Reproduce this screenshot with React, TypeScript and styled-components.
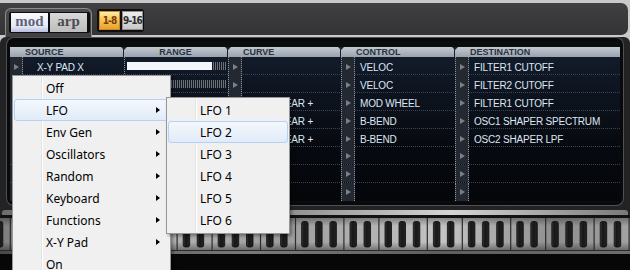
import React from 'react'
import styled, { createGlobalStyle, css } from 'styled-components'

const GlobalStyle = createGlobalStyle`
  * { box-sizing: border-box; }
  html, body { margin: 0; padding: 0; }
  body {
    width: 630px;
    height: 270px;
    overflow: hidden;
    background: #c9c9c9;
    font-family: 'Liberation Sans', Arial, sans-serif;
  }
`

const Screen = styled.div`
  position: relative;
  width: 630px;
  height: 270px;
  overflow: hidden;
  padding-top: 3px;
  display: flex;
  flex-direction: column;
`

// top bar with the mod / arp tabs and the 1-8 / 9-16 page switch
const TopBar = styled.div`
  height: 32px;
  margin-right: 2px;
  display: flex;
  align-items: flex-end;
  background: linear-gradient(#403f42, #333335);
  border-radius: 0 7px 7px 0;
`
const TabPanel = styled.div`
  position: relative;
  z-index: 1;
  height: 29px;
  margin: 0 0 -2px 5px;
  padding: 3px 0 0 3px;
  width: 87px;
  background: linear-gradient(#4c4c4f, #3e3e40);
  border: 1px solid #8b8b8d;
  border-bottom: none;
  border-radius: 6px 6px 0 0;
`
const SegGroup = styled.div`
  display: flex;
  gap: 2px;
  padding: 1px 2px;
  width: 81px;
  height: 21px;
  background: #0e0e0f;
  border-radius: 2px;
`
const SegButton = styled.div<{ $active?: boolean }>`
  width: 37px;
  display: flex;
  align-items: center;
  justify-content: center;
  font: bold 15px/1 'Liberation Serif', 'Times New Roman', serif;
  padding-bottom: 2px;
  ${(p) =>
    p.$active
      ? css`
          color: #5d6478;
          background: linear-gradient(#fbfcfe, #e4e8f2 70%, #b7bde0);
        `
      : css`
          color: #4c4c4e;
          background: linear-gradient(#d8d8d8, #bdbdbd);
        `}
`
const PageGroup = styled.div`
  display: flex;
  gap: 2px;
  margin: 0 0 3px 5px;
  padding: 2px 1px 2px 2px;
  height: 23px;
  background: #0f0f10;
  border-radius: 3px;
`
const PageButton = styled.div<{ $active?: boolean }>`
  width: 21px;
  display: flex;
  align-items: center;
  justify-content: center;
  white-space: nowrap;
  font: bold 10px/1 'DejaVu Sans Condensed', 'Liberation Sans Narrow', sans-serif;
  letter-spacing: -0.9px;
  border-radius: 1px;
  ${(p) =>
    p.$active
      ? css`
          color: #7a3c00;
          background: linear-gradient(#fff2b8, #f7c65a 45%, #e89d2c);
          box-shadow: inset 0 0 0 1px #c8891e;
        `
      : css`
          color: #2e2e30;
          background: linear-gradient(#f0f0f0, #c6c6c8);
          box-shadow: inset 0 0 0 1px #8e8e90;
        `}
`

const MainPanel = styled.div`
  flex: 1;
  margin-top: 2px;
  display: flex;
  flex-direction: column;
  background: #232325;
  border-radius: 6px 6px 0 0;
`
const TableFrame = styled.div`
  margin: 1px 7px 0 7px;
  padding: 6px 0 1px;
  background: #0b0c0e;
  border: 3px solid #08090a;
  border-radius: 7px;
  box-shadow: 0 0 0 1px #505054;
`

const COLS = '114px 104px 113px 114px 165px'

const HeadRow = styled.div`
  display: grid;
  grid-template-columns: ${COLS};
  height: 10px;
`
const HeadCell = styled.div<{ $center?: boolean }>`
  position: relative;
  background: linear-gradient(#c3cad2, #9aa2ac);
  border-right: 1px solid #1d2127;
  font: bold 9px/10px 'Liberation Sans', Arial, sans-serif;
  color: #29313d;
  white-space: nowrap;
  padding-left: ${(p) => (p.$center ? 0 : 15)}px;
  text-align: ${(p) => (p.$center ? 'center' : 'left')};
  &::after {
    content: '';
    position: absolute;
    right: -4px;
    top: 0;
    border-left: 3px solid transparent;
    border-right: 3px solid transparent;
    border-top: 3px solid #1d2127;
    z-index: 1;
  }
  &:last-child {
    border-right: none;
  }
  &:last-child::after {
    display: none;
  }
`

const Body = styled.div`
  background: linear-gradient(#121b2a, #070a10 60%, #04060a);
`
const Row = styled.div`
  display: grid;
  grid-template-columns: ${COLS};
  height: 18px;
  border-bottom: 1px dotted #3c4454;
  &:last-child {
    border-bottom: none;
  }
`
const Cell = styled.div`
  display: flex;
  min-width: 0;
`
const Arrow = styled.div<{ $first?: boolean }>`
  flex: none;
  width: ${(p) => (p.$first ? 13 : 14)}px;
  display: flex;
  align-items: center;
  justify-content: center;
  background: #242931;
  border-right: 1px dotted #8d95a0;
  border-left: ${(p) => (p.$first ? 'none' : '1px dotted #8d95a0')};
  &::after {
    content: '';
    border-left: 5px solid #78808b;
    border-top: 3.5px solid transparent;
    border-bottom: 3.5px solid transparent;
  }
`
const CellText = styled.div<{ $pad?: number; $center?: boolean }>`
  flex: 1;
  min-width: 0;
  padding-top: 2px;
  padding-left: ${(p) => (p.$center ? 0 : p.$pad ?? 5)}px;
  text-align: ${(p) => (p.$center ? 'center' : 'left')};
  font-size: 10px;
  line-height: 17px;
  letter-spacing: -0.2px;
  color: #dde6f3;
  white-space: nowrap;
`
const RangeCell = styled.div`
  border-left: 1px dotted #8d95a0;
  padding: 5px 2px 0 2px;
`
const RangeTrack = styled.div`
  height: 8px;
  background: repeating-linear-gradient(90deg, #6a717b 0 1px, #151920 1px 2px);
`
const RangeFill = styled.div`
  height: 100%;
  background: #f3f6fa;
`

// keyboard strip under the matrix
const KeyArea = styled.div`
  margin-top: 5px;
  display: flex;
  flex-direction: column;
`
const Rail = styled.div`
  height: 5px;
  margin: 0 2px;
  border-radius: 3px 3px 0 0;
  background: linear-gradient(90deg, #6c6c6c, #a9a9a9 25%, #8e8e8e 45%, #d6d6d6 72%, #9a9a9a 90%, #7a7a7a);
`
const KeyBed = styled.div`
  height: 35px;
  border-top: 3px solid #121212;
  background: linear-gradient(rgba(0, 0, 0, 0.3), transparent 25%, transparent 75%, rgba(0, 0, 0, 0.35)),
    linear-gradient(90deg, #7e7e7e, #b8b8b8 22%, #9c9c9c 45%, #c4c4c4 70%, #8e8e8e 88%, #a2a2a2);
`
const BottomRail = styled.div`
  height: 4px;
  border-top: 1px solid #2a2a2a;
  background: linear-gradient(90deg, #4a4a4a, #7a7a7a 40%, #5e5e5e 70%, #6e6e6e);
`
const Tail = styled.div`
  flex: 1;
  background: #070707;
`

// context menu (Windows 7 look)
const MenuBox = styled.div`
  position: absolute;
  z-index: 5;
  padding: 1px;
  background: #f0f0f0;
  border: 1px solid #979797;
  box-shadow: 2px 2px 3px rgba(0, 0, 0, 0.35);
  font-family: 'Noto Sans', 'Segoe UI', sans-serif;
  font-size: 12px;
  color: #000;
  &::before {
    content: '';
    position: absolute;
    top: 1px;
    bottom: 1px;
    left: 28px;
    width: 1px;
    background: #e2e3e3;
    box-shadow: 1px 0 0 #ffffff;
  }
`
const MainMenu = styled(MenuBox)`
  left: 12px;
  top: 75px;
  width: 159px;
`
const SubMenu = styled(MenuBox)`
  left: 166px;
  top: 97px;
  width: 124px;
  padding-bottom: 2px;
  z-index: 6;
`
const MenuItem = styled.div<{ $hot?: boolean }>`
  position: relative;
  height: 22px;
  display: flex;
  align-items: center;
  padding: 0 8px 0 31px;
  border: 1px solid transparent;
  border-radius: 3px;
  white-space: nowrap;
  ${(p) =>
    p.$hot &&
    css`
      border-color: #b3d2f6;
      background: linear-gradient(#f4f8fd, #e1ebf8);
    `}
`
const SubArrow = styled.span`
  margin-left: auto;
  border-left: 4px solid #000;
  border-top: 3.5px solid transparent;
  border-bottom: 3.5px solid transparent;
`

type ModRow = {
  src: string
  range: number
  curve: string
  ctrl: string
  dest: string
}

const rows: ModRow[] = [
  { src: 'X-Y PAD X', range: 86, curve: '', ctrl: 'VELOC', dest: 'FILTER1 CUTOFF' },
  { src: '', range: 0, curve: '', ctrl: 'VELOC', dest: 'FILTER2 CUTOFF' },
  { src: '', range: 50, curve: 'LINEAR +', ctrl: 'MOD WHEEL', dest: 'FILTER1 CUTOFF' },
  { src: '', range: 40, curve: 'LINEAR +', ctrl: 'B-BEND', dest: 'OSC1 SHAPER SPECTRUM' },
  { src: '', range: 40, curve: 'LINEAR +', ctrl: 'B-BEND', dest: 'OSC2 SHAPER LPF' },
  { src: '', range: 0, curve: '', ctrl: '', dest: '' },
  { src: '', range: 0, curve: '', ctrl: '', dest: '' },
  { src: '', range: 0, curve: '', ctrl: '', dest: '' },
]

const menuItems = [
  { label: 'Off', sub: false },
  { label: 'LFO', sub: true },
  { label: 'Env Gen', sub: true },
  { label: 'Oscillators', sub: true },
  { label: 'Random', sub: true },
  { label: 'Keyboard', sub: true },
  { label: 'Functions', sub: true },
  { label: 'X-Y Pad', sub: true },
  { label: 'On', sub: false },
]

const Keys = () => {
  const octave = 83.4
  const start = 9.7 - octave
  const blacks = [6.7, 20.7, 41.7, 55.7, 70]
  const items = []
  for (let k = 0; k < 9; k++) {
    const base = start + k * octave
    items.push(<rect key={`l${k}a`} x={base} y={0} width={1.2} height={32} fill="#2c2c2c" />)
    items.push(<rect key={`l${k}b`} x={base + 35} y={0} width={1.2} height={32} fill="#2c2c2c" />)
    blacks.forEach((off, i) =>
      items.push(
        <rect
          key={`b${k}-${i}`}
          x={base + off}
          y={3.5}
          width={6.5}
          height={25.5}
          rx={2}
          fill="url(#blackKey)"
          stroke="#0b0b0b"
          strokeWidth={0.8}
        />
      )
    )
  }
  return (
    <svg width="630" height="32" viewBox="0 0 630 32" style={{ display: 'block' }}>
      <defs>
        <linearGradient id="blackKey" x1="0" x2="1" y1="0" y2="0">
          <stop offset="0" stopColor="#3a3a3a" />
          <stop offset="0.35" stopColor="#181818" />
          <stop offset="1" stopColor="#222" />
        </linearGradient>
      </defs>
      {items}
    </svg>
  )
}

export default function App() {
  return (
    <>
      <GlobalStyle />
      <Screen>
        <TopBar>
          <TabPanel>
            <SegGroup>
              <SegButton $active>mod</SegButton>
              <SegButton>arp</SegButton>
            </SegGroup>
          </TabPanel>
          <PageGroup>
            <PageButton $active>1-8</PageButton>
            <PageButton>9-16</PageButton>
          </PageGroup>
        </TopBar>

        <MainPanel>
          <TableFrame>
            <HeadRow>
              <HeadCell>SOURCE</HeadCell>
              <HeadCell $center>RANGE</HeadCell>
              <HeadCell>CURVE</HeadCell>
              <HeadCell>CONTROL</HeadCell>
              <HeadCell>DESTINATION</HeadCell>
            </HeadRow>
            <Body>
              {rows.map((r, i) => (
                <Row key={i}>
                  <Cell>
                    <Arrow $first />
                    <CellText $pad={14}>{r.src}</CellText>
                  </Cell>
                  <RangeCell>
                    <RangeTrack>
                      <RangeFill style={{ width: `${r.range}%` }} />
                    </RangeTrack>
                  </RangeCell>
                  <Cell>
                    <Arrow />
                    <CellText $center>{r.curve}</CellText>
                  </Cell>
                  <Cell>
                    <Arrow />
                    <CellText>{r.ctrl}</CellText>
                  </Cell>
                  <Cell>
                    <Arrow />
                    <CellText>{r.dest}</CellText>
                  </Cell>
                </Row>
              ))}
            </Body>
          </TableFrame>

          <KeyArea>
            <Rail />
            <KeyBed>
              <Keys />
            </KeyBed>
            <BottomRail />
          </KeyArea>
          <Tail />
        </MainPanel>

        <MainMenu>
          {menuItems.map((m) => (
            <MenuItem key={m.label} $hot={m.label === 'LFO'}>
              {m.label}
              {m.sub && <SubArrow />}
            </MenuItem>
          ))}
        </MainMenu>
        <SubMenu>
          {[1, 2, 3, 4, 5, 6].map((n) => (
            <MenuItem key={n} $hot={n === 2}>
              LFO {n}
            </MenuItem>
          ))}
        </SubMenu>
      </Screen>
    </>
  )
}
